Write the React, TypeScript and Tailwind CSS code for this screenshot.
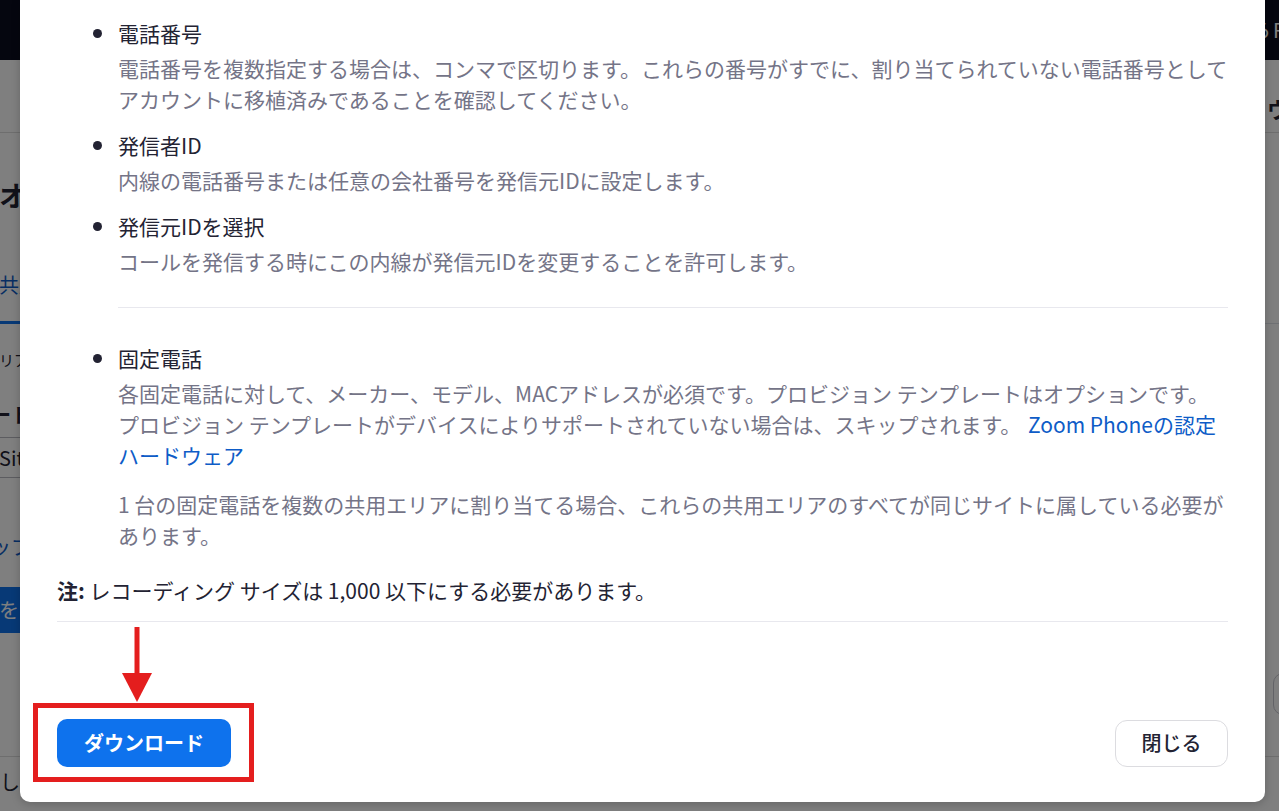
import React from "react";

function Dot() {
  return (
    <div className="w-[25px] h-[31px] flex items-center shrink-0">
      <div className="w-[9px] h-[9px] rounded-full bg-[#232333]" />
    </div>
  );
}

function Item({ title, children, className = "" }: { title: string; children: React.ReactNode; className?: string }) {
  return (
    <li className={"flex " + className}>
      <Dot />
      <div className="flex flex-col">
        <div className="text-[#232333] leading-[31px]">{title}</div>
        {children}
      </div>
    </li>
  );
}

export default function App() {
  return (
    <div className="relative w-[1279px] h-[811px] overflow-hidden bg-white font-['Noto_Sans_CJK_JP','Noto_Sans',sans-serif]">
      {/* background page */}
      <div className="flex flex-col h-full">
        <header className="h-[60px] shrink-0 bg-[#0b0d1e] flex items-center pl-[1071px] whitespace-nowrap">
          <span className="text-white text-[20px]">お問い合わせはこちら</span>
          <span className="text-white text-[20px] ml-[2px]">RESOURCES</span>
        </header>
        <div className="h-[73px] shrink-0 border-b border-[#dcdcdc] pl-[1267px] pt-[33px] whitespace-nowrap">
          <span className="text-[22px] leading-[30px] font-bold text-[#232333]">ウェビナー</span>
        </div>
        <div className="flex-1 flex flex-row">
          <div className="flex flex-col w-[800px] -ml-[1px]">
            <div className="mt-[44px] text-[28px] leading-[36px] font-bold text-[#232333] whitespace-nowrap">オフィス電話</div>
            <div className="mt-[58px] flex border-b border-[#dfe3e8] w-[1300px]">
              <div className="pb-[22px] border-b-[3px] border-[#0e72ed] -mb-px text-[20px] leading-[28px] text-[#0e5cc7] whitespace-nowrap">共用エリア電話</div>
            </div>
            <div className="mt-[26px] text-[15px] leading-[20px] text-[#232333] whitespace-nowrap">リアを追加</div>
            <div className="mt-[31px] -ml-[8px] text-[20px] leading-[28px] font-bold text-[#232333] whitespace-nowrap">ート</div>
            <div className="mt-[8px] -ml-[20px] h-[41px] w-[300px] border-y border-[#b8b8c0] flex items-center pl-[20px] text-[20px] text-[#232333]">Site</div>
            <div className="mt-[55px] -ml-[8px] text-[20px] leading-[28px] text-[#0e5cc7] whitespace-nowrap">ップロード</div>
            <div className="mt-[26px] -ml-[30px] h-[46px] w-[200px] rounded-[8px] bg-[#0e72ed] flex items-center pl-[30px] text-[20px] text-white whitespace-nowrap">をアップ</div>
          </div>
          <div className="ml-auto w-[6px] shrink-0 pt-[540px] overflow-visible">
            <div className="h-[42px] w-[120px] rounded-[10px] border border-[#c8c8d0] bg-white" />
          </div>
        </div>
        <footer className="h-[55px] shrink-0 border-t border-[#dcdcdc] flex items-center pb-[4px] pl-0 text-[20px] text-[#232333]">
          しばらく
        </footer>
      </div>

      {/* overlay */}
      <div className="absolute inset-0 bg-black/50" />

      {/* modal */}
      <div className="absolute left-[20px] top-0 w-[1245px] h-[802px] bg-white rounded-b-[10px] shadow-[0_2px_10px_rgba(0,0,0,0.2)] px-[37px] pt-[18px] pb-[35px] flex flex-col text-[21px]">
        <ul className="pl-[36px]">
          <Item title="電話番号">
            <p className="mt-[4px] leading-[31px] text-[#747487] whitespace-nowrap">
              電話番号を複数指定する場合は、コンマで区切ります。これらの番号がすでに、割り当てられていない電話番号として
              <br />
              アカウントに移植済みであることを確認してください。
            </p>
          </Item>
          <Item title="発信者ID" className="mt-[15px]">
            <p className="mt-[4px] leading-[31px] text-[#747487] whitespace-nowrap">
              内線の電話番号または任意の会社番号を発信元IDに設定します。
            </p>
          </Item>
          <Item title="発信元IDを選択" className="mt-[15px]">
            <p className="mt-[4px] leading-[31px] text-[#747487] whitespace-nowrap">
              コールを発信する時にこの内線が発信元IDを変更することを許可します。
            </p>
          </Item>
          <li className="mt-[30px] ml-[25px] border-t border-[#e8e8ee]" />
          <Item title="固定電話" className="mt-[35px]">
            <p className="mt-[4px] leading-[31px] text-[#747487] whitespace-nowrap">
              各固定電話に対して、メーカー、モデル、MACアドレスが必須です。プロビジョン テンプレートはオプションです。
              <br />
              プロビジョン テンプレートがデバイスによりサポートされていない場合は、スキップされます。{" "}
              <span className="text-[#0e5cc7] ml-[2px]">Zoom Phoneの認定</span>
              <br />
              <span className="text-[#0e5cc7]">ハードウェア</span>
            </p>
            <p className="mt-[18px] leading-[31px] text-[#747487] whitespace-nowrap">
              1 台の固定電話を複数の共用エリアに割り当てる場合、これらの共用エリアのすべてが同じサイトに属している必要が
              <br />
              あります。
            </p>
          </Item>
        </ul>
        <p className="mt-[24px] leading-[31px] text-[#232333] whitespace-nowrap">
          <span className="font-bold">注:</span> レコーディング サイズは 1,000 以下にする必要があります。
        </p>
        <div className="mt-[15px] border-t border-[#e8e8ee]" />
        <div className="mt-auto flex items-center justify-between">
          <button className="h-[48px] w-[174px] rounded-[10px] bg-[#0e72ed] text-white font-bold text-[20px] flex items-center justify-center">
            ダウンロード
          </button>
          <button className="h-[47px] w-[113px] rounded-[12px] bg-white border border-[#dcdce0] text-[#232333] text-[20px] font-medium flex items-center justify-center">
            閉じる
          </button>
        </div>
      </div>

      {/* annotation */}
      <div className="absolute left-[33px] top-[703px] w-[221px] h-[79px] border-[5px] border-[#e41e1e]" />
      <svg className="absolute left-[121px] top-[627px]" width="32" height="76" viewBox="0 0 32 76">
        <rect x="13.5" y="0" width="5" height="50" fill="#e41e1e" />
        <polygon points="1,46 31,46 16,75" fill="#e41e1e" />
      </svg>
    </div>
  );
}
